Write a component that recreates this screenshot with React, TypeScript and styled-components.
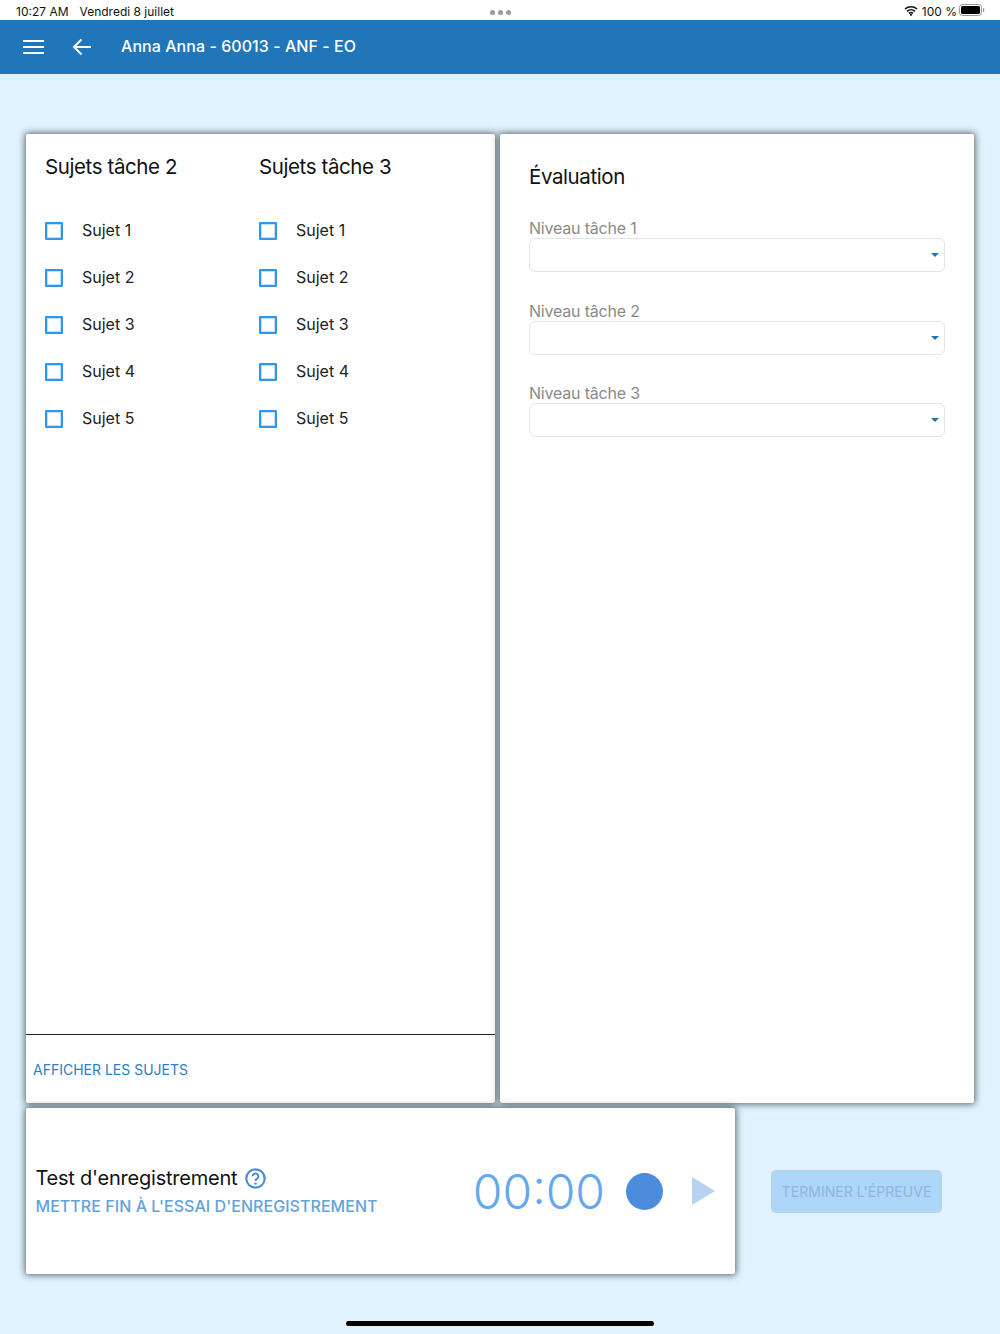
import styled, { createGlobalStyle } from 'styled-components';

const GlobalStyle = createGlobalStyle`
  html, body {
    margin: 0;
    padding: 0;
    background: #e0f3fe;
    font-family: Inter, "Noto Sans", sans-serif;
  }
`;

const Page = styled.div`
  position: relative;
  width: 1000px;
  height: 1334px;
  overflow: hidden;
  display: flex;
  flex-direction: column;
  background: #e0f3fe;
`;

const StatusBar = styled.div`
  height: 20px;
  padding: 2px 15px 0 16px;
  display: flex;
  align-items: center;
  background: #fff;
  color: #111;
  font-size: 12px;
  box-sizing: border-box;
`;

const StatusText = styled.span`
  margin-right: 11px;
  white-space: nowrap;
`;

const Dots = styled.div`
  position: absolute;
  top: 10px;
  left: 490px;
  display: flex;
  gap: 3px;
`;

const Dot = styled.span`
  width: 5px;
  height: 5px;
  border-radius: 50%;
  background: #9b9b9b;
`;

const StatusRight = styled.div`
  margin-left: auto;
  display: flex;
  align-items: center;
  gap: 4px;
`;

const BatteryIcon = styled.svg`
  margin-left: -2px;
  margin-top: -2px;
`;

const WifiIcon = styled.svg`
  margin-top: -2px;
`;

const AppBar = styled.header`
  height: 54px;
  display: flex;
  align-items: center;
  background: #2175b9;
  color: #fff;
`;

const MenuIcon = styled.svg`
  margin-left: 23px;
  width: 21px;
  height: 16px;
`;

const BackIcon = styled.svg`
  margin-left: 28px;
  width: 20px;
  height: 18px;
`;

const AppTitle = styled.h1`
  margin: 0 0 2px 29px;
  font-size: 16px;
  font-weight: 500;
  letter-spacing: 0.05px;
`;

const Content = styled.main`
  padding: 60px 0 0 26px;
  display: flex;
  flex-direction: column;
  gap: 5px;
`;

const PanelRow = styled.div`
  display: flex;
  gap: 5px;
  height: 969px;
`;

const Card = styled.section`
  background: #fff;
  border-radius: 2px;
  box-shadow: 0 0 7px 1px rgba(50, 60, 65, 0.8);
`;

const SubjectsCard = styled(Card)`
  width: 469px;
  display: flex;
  flex-direction: column;
`;

const SubjectColumns = styled.div`
  flex: 1;
  display: flex;
  padding: 19px 0 0 19px;
`;

const SubjectColumn = styled.div`
  width: 214px;
`;

const CardTitle = styled.h2`
  margin: 0;
  font-size: 20.5px;
  line-height: 28px;
  font-weight: 400;
  letter-spacing: -0.4px;
  color: #111;
`;

const SubjectList = styled.ul`
  margin: 37px 0 0;
  padding: 0;
  list-style: none;
  display: flex;
  flex-direction: column;
  gap: 23px;
`;

const SubjectRow = styled.li`
  height: 24px;
  display: flex;
  align-items: center;
  gap: 19px;
  font-size: 16px;
  color: #222;
`;

const CheckBox = styled.span`
  width: 18px;
  height: 18px;
  margin-top: 2px;
  border: 2px solid #2f96ee;
  border-radius: 1px;
  box-sizing: border-box;
  box-shadow: inset 0 0 0 1px rgba(47, 150, 238, 0.3);
`;

const CardFooter = styled.div`
  height: 69px;
  padding-left: 7px;
  display: flex;
  align-items: center;
  border-top: 1px solid #222;
  box-sizing: border-box;
`;

const TextLink = styled.span`
  font-size: 14px;
  color: #2d80c4;
`;

const EvaluationCard = styled(Card)`
  width: 474px;
  padding: 29px 29px 0;
  box-sizing: border-box;
`;

const FieldList = styled.div`
  margin-top: 27px;
  display: flex;
  flex-direction: column;
  gap: 28.5px;
`;

const FieldLabel = styled.label`
  display: block;
  font-size: 16px;
  line-height: 20px;
  letter-spacing: -0.2px;
  color: #8a8a8a;
`;

const SelectBox = styled.div`
  height: 34px;
  display: flex;
  align-items: center;
  justify-content: flex-end;
  padding-right: 5px;
  border: 1px solid #e4e4e4;
  border-radius: 6px;
  box-sizing: border-box;
`;

const Caret = styled.span`
  width: 0;
  height: 0;
  border-left: 4px solid transparent;
  border-right: 4px solid transparent;
  border-top: 4px solid #2175b9;
`;

const BottomRow = styled.div`
  display: flex;
  align-items: center;
`;

const RecorderCard = styled(Card)`
  width: 709px;
  height: 166px;
  padding: 0 20px 0 9.5px;
  display: flex;
  align-items: center;
  box-sizing: border-box;
`;

const RecorderInfo = styled.div`
  flex: 1;
  padding-top: 2px;
`;

const RecorderTitleRow = styled.div`
  display: flex;
  align-items: center;
  gap: 8px;
  font-size: 20px;
  line-height: 28px;
  letter-spacing: -0.23px;
  color: #111;
`;

const RecorderAction = styled.div`
  font-size: 16px;
  line-height: 28px;
  font-weight: 500;
  letter-spacing: 0.05px;
  color: #62a3dc;
`;

const Timer = styled.div`
  font-size: 48px;
  font-weight: 300;
  color: #64a8f0;
`;

const RecordDot = styled.span`
  margin-left: 21px;
  width: 37px;
  height: 37px;
  border-radius: 50%;
  background: #4b8cdc;
`;

const PlayIcon = styled.svg`
  margin-left: 29px;
  width: 23px;
  height: 28px;
`;

const FinishButton = styled.button`
  margin-left: 36px;
  width: 171px;
  height: 43px;
  padding: 0;
  border: 0;
  border-radius: 5px;
  background: #aed6f8;
  color: #8db7dc;
  font-family: inherit;
  font-size: 14px;
  letter-spacing: 0.05px;
`;

const HomeIndicator = styled.div`
  position: absolute;
  left: 346px;
  top: 1321px;
  width: 308px;
  height: 5px;
  border-radius: 3px;
  background: #000;
`;

const subjects = ['Sujet 1', 'Sujet 2', 'Sujet 3', 'Sujet 4', 'Sujet 5'];
const levels = ['Niveau tâche 1', 'Niveau tâche 2', 'Niveau tâche 3'];

const SubjectGroup = ({ title }: { title: string }) => (
  <SubjectColumn>
    <CardTitle>{title}</CardTitle>
    <SubjectList>
      {subjects.map((subject) => (
        <SubjectRow key={subject}>
          <CheckBox />
          {subject}
        </SubjectRow>
      ))}
    </SubjectList>
  </SubjectColumn>
);

const App = () => (
  <Page>
    <GlobalStyle />
    <StatusBar>
      <StatusText>10:27 AM</StatusText>
      <StatusText>Vendredi 8 juillet</StatusText>
      <StatusRight>
        <WifiIcon width="14" height="11" viewBox="0 0 14 11">
          <path d="M1 4a9 9 0 0 1 12 0M3 6.3a6 6 0 0 1 8 0M5 8.4a3 3 0 0 1 4 0" fill="none" stroke="#111" strokeWidth="1.6" />
          <circle cx="7" cy="9.8" r="1.1" fill="#111" />
        </WifiIcon>
        <span>100 %</span>
        <BatteryIcon width="26" height="12" viewBox="0 0 26 12">
          <rect x="0.5" y="0.5" width="22" height="11" rx="3" fill="none" stroke="#999" />
          <rect x="2" y="2" width="19" height="8" rx="1.5" fill="#000" />
          <rect x="24" y="4" width="1.2" height="4" rx="0.6" fill="#999" />
        </BatteryIcon>
      </StatusRight>
    </StatusBar>
    <Dots>
      <Dot />
      <Dot />
      <Dot />
    </Dots>
    <AppBar>
      <MenuIcon viewBox="0 0 21 16">
        <path d="M0 2h21M0 8h21M0 14h21" stroke="#fff" strokeWidth="2" />
      </MenuIcon>
      <BackIcon viewBox="0 0 20 18">
        <path d="M19 9H2M9.5 1.5 2 9l7.5 7.5" fill="none" stroke="#fff" strokeWidth="2" />
      </BackIcon>
      <AppTitle>Anna Anna - 60013 - ANF - EO</AppTitle>
    </AppBar>
    <Content>
      <PanelRow>
        <SubjectsCard>
          <SubjectColumns>
            <SubjectGroup title="Sujets tâche 2" />
            <SubjectGroup title="Sujets tâche 3" />
          </SubjectColumns>
          <CardFooter>
            <TextLink>AFFICHER LES SUJETS</TextLink>
          </CardFooter>
        </SubjectsCard>
        <EvaluationCard>
          <CardTitle>Évaluation</CardTitle>
          <FieldList>
            {levels.map((level) => (
              <div key={level}>
                <FieldLabel>{level}</FieldLabel>
                <SelectBox>
                  <Caret />
                </SelectBox>
              </div>
            ))}
          </FieldList>
        </EvaluationCard>
      </PanelRow>
      <BottomRow>
        <RecorderCard>
          <RecorderInfo>
            <RecorderTitleRow>
              Test d'enregistrement
              <svg width="21" height="21" viewBox="0 0 21 21">
                <circle cx="10.5" cy="10.5" r="9.2" fill="none" stroke="#4b8cdc" strokeWidth="2.2" />
                <path d="M7.6 8.3a2.9 2.9 0 1 1 4.4 2.5c-1 .6-1.5 1.1-1.5 2.2" fill="none" stroke="#4b8cdc" strokeWidth="2" />
                <circle cx="10.5" cy="15.6" r="1.2" fill="#4b8cdc" />
              </svg>
            </RecorderTitleRow>
            <RecorderAction>METTRE FIN À L'ESSAI D'ENREGISTREMENT</RecorderAction>
          </RecorderInfo>
          <Timer>00:00</Timer>
          <RecordDot />
          <PlayIcon viewBox="0 0 23 28">
            <path d="M0 0 23 14 0 28Z" fill="#b8d2f2" />
          </PlayIcon>
        </RecorderCard>
        <FinishButton>TERMINER L'ÉPREUVE</FinishButton>
      </BottomRow>
    </Content>
    <HomeIndicator />
  </Page>
);

export default App;
